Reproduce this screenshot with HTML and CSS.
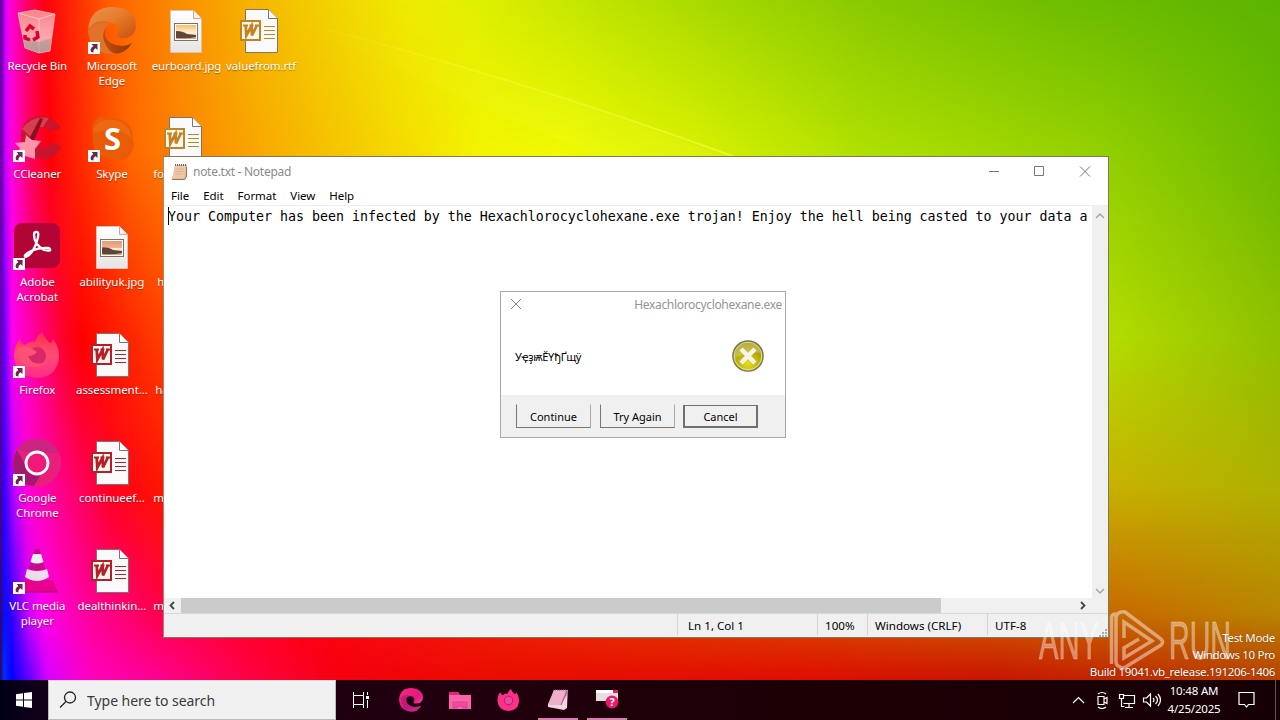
FILE: index.html
```html
<!DOCTYPE html>
<html lang="en">
<head>
<meta charset="utf-8">
<title>Desktop</title>
<link rel="stylesheet" href="styles.css">
</head>
<body>
<svg class="defs" width="0" height="0">
  <defs>
    <linearGradient id="paper" x1="0" y1="0" x2="0" y2="1"><stop offset="0" stop-color="#fff"/><stop offset="1" stop-color="#e6e4e4"/></linearGradient>
    <linearGradient id="edgeA" x1="0" y1="0" x2="1" y2="1"><stop offset="0" stop-color="#e89650"/><stop offset=".5" stop-color="#e47a28"/><stop offset="1" stop-color="#c85010"/></linearGradient>
    <linearGradient id="edgeB" x1="0" y1="0" x2="1" y2="0"><stop offset="0" stop-color="#d85a10"/><stop offset="1" stop-color="#8e3804"/></linearGradient>
    <linearGradient id="edgeP" x1="0" y1="0" x2="1" y2="1"><stop offset="0" stop-color="#ff2a7c"/><stop offset=".55" stop-color="#e01880"/><stop offset="1" stop-color="#ff60a8"/></linearGradient>
    <linearGradient id="bin" x1="0" y1="0" x2="0" y2="1"><stop offset="0" stop-color="#f8848a"/><stop offset=".65" stop-color="#ffa8ae"/><stop offset="1" stop-color="#b8a0a0"/></linearGradient>
    <linearGradient id="sky" x1="0" y1="0" x2="0" y2="1"><stop offset="0" stop-color="#f6bd6c"/><stop offset=".55" stop-color="#fff0d8"/><stop offset="1" stop-color="#d8a880"/></linearGradient>
    <linearGradient id="foxg" x1="0" y1="0" x2="0" y2="1"><stop offset="0" stop-color="#f83048"/><stop offset=".5" stop-color="#ff4c74"/><stop offset="1" stop-color="#ff2c88"/></linearGradient>
    <radialGradient id="gold" cx=".5" cy=".75" r=".7"><stop offset="0" stop-color="#e4dc20"/><stop offset=".6" stop-color="#b6aa08"/><stop offset="1" stop-color="#8c8418"/></radialGradient>
    <symbol id="arrow" viewBox="0 0 12 12"><rect width="12" height="12" fill="#fff"/><path d="M3.500 2h6v6L7.600 6.300Q5 7.500 5.500 10.500L3 10Q1.500 6.500 5.400 4z" fill="#70264c"/></symbol>
    <symbol id="word" viewBox="0 0 48 48">
      <path d="M8.500 2.500h23l9 9v34h-32z" fill="#fafafa" stroke="#82716c"/>
      <path d="M31.500 2.500v9h9" fill="#fff" stroke="#82716c"/>
      <path d="M27 19.500h11M27 23.500h11M27 27.500h11M27 31.500h11" stroke="currentColor"/>
      <path d="M4 14h19v19H4z" fill="#fff6ee" stroke="currentColor" stroke-width="2"/>
      <path d="M6 18.500h5M12.500 18.500h4M18 18.500h4" stroke="currentColor" stroke-width="2"/>
      <path d="M8.700 18l.6 10.500L14.500 19l.5 9.500L20 18" fill="none" stroke="currentColor" stroke-width="2.800"/>
    </symbol>
    <symbol id="image" viewBox="0 0 48 48">
      <path d="M8.500 3.500h23l8 8v34h-31z" fill="url(#paper)" stroke="#d4c4b4"/>
      <path d="M31.500 3.500v8h8" fill="#f4f2f0" stroke="#c8a890"/>
      <rect x="12.500" y="16.500" width="23" height="17" fill="#fff" stroke="#807060"/>
      <rect x="14" y="18" width="20" height="14" fill="url(#sky)"/>
      <path d="M14 24q7 0 11 3l9 1v2q-8 2-20 1z" fill="#604438"/>
    </symbol>
    <symbol id="shape-fox" viewBox="0 0 48 48">
      <path d="M1 26Q1 14 7 8Q8 13 12 14Q17 9 22 11Q24 5 29 1Q32 8 37 12Q40 11 40 8Q47 17 46 27Q44 46 24 47Q3 46 1 26z"/>
    </symbol>
  </defs>
</svg>

<main class="desktop">
  <div class="wallpaper">
    <div class="band b0"></div><div class="band b1"></div><div class="band b2"></div><div class="band b3"></div><div class="band b4"></div><div class="band b5"></div>
    <svg class="ray" viewBox="0 0 1280 680">
      <defs><linearGradient id="beam" gradientUnits="userSpaceOnUse" x1="290" y1="0" x2="735" y2="0"><stop offset="0" stop-color="#ffff50" stop-opacity="0"/><stop offset=".5" stop-color="#ffff50" stop-opacity=".35"/><stop offset="1" stop-color="#ffff50" stop-opacity=".5"/></linearGradient></defs>
      <path d="M290 20Q520 78 735 157" stroke="url(#beam)" fill="none" stroke-width="2"/><path d="M290 22Q520 80 730 158H600z" fill="url(#beam)" opacity=".25"/></svg>
  </div>

  <section class="icons">
    <div class="item"><svg class="pic" viewBox="0 0 48 48"><path d="M5 6L22 3L42 7L37 44L26 46L12 41z" fill="url(#bin)" stroke="#e8c0c0" stroke-opacity=".8"/><path d="M5 6l21 6 16-5M26 12v34" fill="none" stroke="#ffd8d8" stroke-opacity=".7"/><path d="M10 31l16 4 13-4-2 13-11 2-14-5z" fill="#ac9494" opacity=".55"/><path d="M13 24l4-5 4 3M24 24l1 6-5 3M17 33l-5-2 0-3" fill="none" stroke="#e00030" stroke-width="3.500"/></svg><span>Recycle Bin</span></div>
    <div class="item"><svg class="pic" viewBox="0 0 48 48"><path d="M0 23Q2 0 25 0Q47 1 48 19Q47 32 33 31Q27 30 30 26Q33 19 24 16Q8 11 0 23z" fill="url(#edgeA)"/><path d="M0 24Q7 12 20 16Q12 29 23 36Q35 42 44 36Q37 48 24 47Q3 45 0 24z" fill="url(#edgeB)"/><path d="M0 24Q7 12 22 16Q10 26 19 40Q23 46 28 47Q2 49 0 24z" fill="#e0722a"/></svg><svg class="sc"><use href="#arrow"/></svg><span>Microsoft<br>Edge</span></div>
    <div class="item"><svg class="pic"><use href="#image"/></svg><span>eurboard.jpg</span></div>
    <div class="item gold"><svg class="pic"><use href="#word"/></svg><span>valuefrom.rtf</span></div>

    <div class="item"><svg class="pic" viewBox="0 0 48 48"><path d="M48 13Q40 1 25 1Q8 4 8 22Q8 43 29 44Q43 44 48 32L39 27Q35 34 29 32Q20 29 22 20Q24 11 32 12L38 16z" fill="#c8142c"/><path d="M9 14Q18 0 36 3L30 12Q20 11 20 24z" fill="#e05060" opacity=".7"/><path d="M27 3l3 1-9 22-5-2z" fill="#8c1024"/><path d="M13 20L19 25L28 26L22 34L22 44L12 41L3 42L7 33L2 28L12 27z" fill="#ff94ac"/></svg><svg class="sc"><use href="#arrow"/></svg><span>CCleaner</span></div>
    <div class="item"><svg class="pic" viewBox="0 0 48 48"><path d="M13 2Q18 1 23 3Q45 3 45 25Q48 32 42 40Q37 47 29 44Q3 45 5 22Q2 5 13 2z" fill="#e85c08"/><path d="M6 13Q12 3 26 5Q42 8 44 24Q33 11 6 18z" fill="#f07018" opacity=".6"/><text class="skype-s" x="24.500" y="35" text-anchor="middle">S</text></svg><svg class="sc"><use href="#arrow"/></svg><span>Skype</span></div>
    <div class="item gold cut"><svg class="pic"><use href="#word"/></svg><span>fo</span></div>
    <div class="item none"></div>

    <div class="item"><svg class="pic" viewBox="0 0 48 48"><rect x="1" y="0" width="46" height="45" rx="8" fill="#b30436"/><path d="M23 9Q27 8 24 18Q20 31 13 34Q9 33 18 28Q28 24 36 25Q40 29 31 27Q21 21 21 12Q21 9 23 9z" fill="none" stroke="#fff" stroke-width="2.300"/></svg><svg class="sc"><use href="#arrow"/></svg><span>Adobe<br>Acrobat</span></div>
    <div class="item"><svg class="pic"><use href="#image"/><path d="M14 18h20v7H14z" fill="#e07868" opacity=".5"/></svg><span>abilityuk.jpg</span></div>
    <div class="item cut"><svg class="pic"></svg><span class="h">ha</span></div>
    <div class="item none"></div>

    <div class="item"><svg class="pic" viewBox="0 0 48 48"><g fill="url(#foxg)"><use href="#shape-fox"/></g><circle cx="24" cy="25" r="9" fill="#d82868"/><path d="M4 17q8-3 14 0l6 4q-3 4-9 4 4 11 19 6-9 8-20 4Q4 30 4 17z" fill="#ff5078"/></svg><svg class="sc"><use href="#arrow"/></svg><span>Firefox</span></div>
    <div class="item red"><svg class="pic"><use href="#word"/></svg><span>assessment...</span></div>
    <div class="item cut"><svg class="pic"></svg><span class="b">ha</span></div>
    <div class="item none"></div>

    <div class="item"><svg class="pic" viewBox="0 0 48 48"><circle cx="24" cy="23.500" r="24" fill="#e8207c"/><path d="M4 11Q12-1 24 0Q40 1 46 14H24z" fill="#c82480"/><path d="M4 11L14 29L28 35L21 47Q0 45 0 23Q1 16 4 11z" fill="#a41870"/><circle cx="24" cy="24" r="11" fill="#f01878" stroke="#fff" stroke-width="2.800"/></svg><svg class="sc"><use href="#arrow"/></svg><span>Google<br>Chrome</span></div>
    <div class="item red"><svg class="pic"><use href="#word"/></svg><span>continueef...</span></div>
    <div class="item cut"><svg class="pic"></svg><span>m</span></div>
    <div class="item none"></div>

    <div class="item"><svg class="pic" viewBox="0 0 48 48"><path d="M9 33h31l5 12H3z" fill="#e80090"/><path d="M3 45h42" stroke="#a00070"/><path d="M22 2h4l9 28q-11 7-22 0z" fill="#c80890"/><path d="M20 7h8l2.500 8q-6.500 3-13 0z" fill="#eee"/><path d="M14 22q10 4 20 0l2 8q-12 8-24 0z" fill="#eedce8"/></svg><svg class="sc"><use href="#arrow"/></svg><span>VLC media<br>player</span></div>
    <div class="item red"><svg class="pic"><use href="#word"/></svg><span>dealthinkin...</span></div>
    <div class="item cut"><svg class="pic"></svg><span>m</span></div>
    <div class="item none"></div>
  </section>

  <section class="notepad">
    <header class="title">
      <svg width="18" height="18" viewBox="0 0 18 18"><path d="M4 2h12v11l-2 4H1z" fill="#e2bd9c"/><path d="M4 3h11l-2 12H1z" fill="#ecc8a8"/><path d="M5 6h8M4.500 8.500h8M4 11h8" stroke="#d8a888" stroke-width=".7"/><path d="M4 2h12" stroke="#806050" stroke-dasharray="1 1" stroke-width="2"/><path d="M15.500 4v9.500l-2 3H1" fill="none" stroke="#a07050"/></svg>
      <span>note.txt - Notepad</span>
      <svg class="wc" width="135" height="29" viewBox="0 0 135 29" fill="none" stroke="#777"><path d="M16 14.500h10M61.500 9.500h9v9h-9zM107 9.500l10 10M117 9.500l-10 10"/></svg>
    </header>
    <nav class="menu"><span>File</span><span>Edit</span><span>Format</span><span>View</span><span>Help</span></nav>
    <div class="work">
      <div class="editor"><i class="caret"></i><pre>Your Computer has been infected by the Hexachlorocyclohexane.exe trojan! Enjoy the hell being casted to your data a</pre></div>
      <div class="vbar"><svg width="16" height="16"><path d="M4 10l4-4 4 4" /></svg><svg width="16" height="16"><path d="M4 7l4 4 4-4"/></svg></div>
    </div>
    <div class="hbar"><svg width="17" height="15"><path d="M10 4L6.500 7.500L10 11"/></svg><div class="thumb"></div><svg class="r" width="16" height="15"><path d="M6 4l3.500 3.500L6 11"/></svg></div>
    <footer class="status"><span class="s1">Ln 1, Col 1</span><span class="s2">100%</span><span class="s3">Windows (CRLF)</span><span class="s4">UTF-8</span>
      <svg width="10" height="10"><path d="M1 9h8M4 6h5M7 3h2" stroke="#aaa" stroke-width="2" stroke-dasharray="2 1"/></svg></footer>
  </section>

  <section class="dialog">
    <header><svg width="12" height="12"><path d="M1 1l10 10M11 1L1 11" stroke="#888" fill="none"/></svg><span>Hexachlorocyclohexane.exe</span></header>
    <div class="msg"><span>УҿҙѭӖҮђҐщӱ</span>
      <svg width="32" height="32" viewBox="0 0 32 32"><circle cx="16" cy="16" r="15.200" fill="url(#gold)" stroke="#77775a" stroke-width="1.300"/><circle cx="16" cy="16" r="13.800" fill="none" stroke="#e8e490" stroke-width="1"/><path d="M3 15Q4 3 16 3Q28 3 29 13Q18 10 3 18z" fill="#d8d070" opacity=".55"/><path d="M9 9l14 14M23 9L9 23" stroke="#f6f4ec" stroke-width="4.500"/></svg></div>
    <footer><button>Continue</button><button>Try Again</button><button class="def">Cancel</button></footer>
  </section>

  <div class="build"><p>Test Mode</p><p>Windows 10 Pro</p><p>Build 19041.vb_release.191206-1406</p></div>

  <svg class="mark" viewBox="0 0 200 64">
    <g class="mark-text"><text x="3" y="51" textLength="60" lengthAdjust="spacingAndGlyphs">ANY</text><text x="133" y="51" textLength="62" lengthAdjust="spacingAndGlyphs">RUN</text></g>
    <path d="M75.500 56V10Q75.500 6 80 6M80 54V9Q82 3 89 4L125 31Q128 34 125 37L88 60Q80 59 80 54M88 30V14l28 19-28 17V40l15-9" fill="none" stroke="#fff" stroke-width="3.500" stroke-opacity=".45"/>
  </svg>
</main>

<footer class="taskbar">
  <div class="start"><svg width="16" height="16"><path d="M0 2.200L7 1.200V7.500H0zM8 1L16 0v7.500H8zM0 8.500h7v6.300L0 13.800zM8 8.500h8V16L8 15z" fill="#fff"/></svg></div>
  <div class="search"><svg width="18" height="18" viewBox="0 0 18 18"><circle cx="11" cy="6.500" r="5.500"/><path d="M7 10.500L1 16.500"/></svg><span>Type here to search</span></div>
  <div class="apps">
    <div><svg width="18" height="16" viewBox="0 0 18 16" fill="none" stroke="#fff"><path d="M1.500 0v3.500h10V0M1.500 16v-3.500h10V16M1.500 3.500v9M11.500 3.500v9M15.500 0v3M15.500 8v8"/><path d="M14 5.500h3" stroke-width="3"/></svg></div>
    <div><svg width="24" height="24" viewBox="0 0 48 48"><path d="M0 23Q2 0 25 0Q47 1 48 19Q47 32 33 31Q27 30 30 26Q33 19 24 16Q10 16 16 30Q24 42 44 36Q37 48 24 47Q2 46 0 23z" fill="url(#edgeP)"/><path d="M3 20Q12 10 23 16Q10 18 16 30Q24 42 44 36Q37 48 24 47Q6 45 3 20z" fill="#b01878" opacity=".65"/></svg></div>
    <div><svg width="22" height="18"><path d="M0 1h9l2 3h11v14H0z" fill="#ff62ac"/><path d="M0 1h9l2 3H0z" fill="#e02878"/><path d="M4 11h14v6h-4v-2H8v2H4z" fill="#f44c9c" stroke="#d84090"/></svg></div>
    <div><svg width="23" height="24" viewBox="0 0 48 48"><g fill="#ff3088"><use href="#shape-fox"/></g><circle cx="24" cy="25" r="9" fill="#e84898" stroke="#b01870" stroke-width="2"/></svg></div>
    <div class="open"><svg width="22" height="22" viewBox="0 0 22 22"><path d="M7 1h14l-1 18-18-4z" fill="#d88cb4"/><path d="M7 1h12l-5 15L1 15z" fill="#ecb0cc"/><path d="M1 15l13 1 6-10v13l-3 2-16-3z" fill="#f3d4e2"/><path d="M14 16L20 2" stroke="#a06080"/><path d="M8 1h12" stroke="#875070" stroke-dasharray="1 1"/></svg></div>
    <div class="open"><svg width="24" height="22"><path d="M1 1h22v11H1z" fill="#e8dce0"/><path d="M1 1h22v3H1z" fill="#fff"/><path d="M18 1h5v3h-5z" fill="#e02060"/><circle cx="17" cy="13" r="6.500" fill="#e8186c"/><text class="question" x="17" y="17" text-anchor="middle">?</text></svg></div>
  </div>
  <div class="tray">
    <svg width="90" height="20" viewBox="0 0 90 20" fill="none" stroke="#fff" stroke-width="1.200"><path d="M1 13l5.500-5.500L12 13M26 6.500h6v8h-6zM32 9l3-1.500v6L32 12M26 4q4-3 8 0M26 17q4 3 8 0M51.500 5.500h11v8h-11M57 14v3M53 17.500h8M47.500 4.500h4v4h-4zM49.500 8.500v8h3M71.500 8h3l4-4v12l-4-4h-3zM81 8q2 2 0 4M83.500 6q4 4 0 8M86 4q5 6 0 12"/></svg>
    <div class="clock"><span>10:48 AM</span><span>4/25/2025</span></div>
    <svg class="note" width="17" height="18" fill="none" stroke="#fff" stroke-width="1.200"><path d="M1 1.500h15v12h-5.500L8.500 16l-2-2.500H1z"/></svg>
    <i class="peek"></i>
  </div>
</footer>
</body>
</html>
```
FILE: styles.css
```css
* { box-sizing: border-box; }
body { margin: 0; width: 1280px; height: 720px; overflow: hidden; display: flex; flex-direction: column; font: 12px "Noto Sans", "Open Sans", sans-serif; background: #000; }
.defs { position: absolute; }
svg { display: block; flex: none; }
.desktop { position: relative; height: 680px; flex: none; overflow: hidden; }

/* The wallpaper blends one horizontal colour ramp into the next going down. */
.wallpaper, .band, .ray { position: absolute; inset: 0; }
.band { -webkit-mask-repeat: no-repeat; mask-repeat: no-repeat; }
.b0 { background: linear-gradient(90deg, #680090 0, #8000d0 3px, #d000ff 5px, #ff00e0 9px, #ff0060 28px, #ff0010 45px, #ff3a00 85px, #ff6000 110px, #fb8e00 180px, #f6b400 250px, #f2d000 320px, #efec00 410px, #e2f000 470px, #c4e600 580px, #a4d800 720px, #86c800 880px, #70be00 1050px, #5cb400 1280px); }
.b1 { background: linear-gradient(90deg, #680090 0, #8000d0 3px, #c800ff 5px, #ff00e0 12px, #ff0050 32px, #ff0008 50px, #ff3000 85px, #ff6600 130px, #fb8400 180px, #f8a800 260px, #f5cc00 360px, #f4f400 480px, #f0fa00 560px, #d8f000 700px, #b0e000 860px, #94d000 1100px, #6cba00 1280px); -webkit-mask-image: linear-gradient(transparent 0, #000 155px); mask-image: linear-gradient(transparent 0, #000 155px); }
.b2 { background: linear-gradient(90deg, #680090 0, #6000ff 4px, #ff00f0 12px, #ff00a0 34px, #ff0030 62px, #ff0000 82px, #ff3800 155px, #f08000 400px, #b4dc00 1110px, #90c000 1280px); -webkit-mask-image: linear-gradient(transparent 155px, #000 340px); mask-image: linear-gradient(transparent 155px, #000 340px); }
.b3 { background: linear-gradient(90deg, #500080 0, #3000ff 4px, #c800ff 15px, #ff00d8 27px, #ff0080 65px, #ff0020 110px, #ff1400 160px, #e04000 500px, #c8b000 1110px, #b0b000 1280px); -webkit-mask-image: linear-gradient(transparent 340px, #000 490px); mask-image: linear-gradient(transparent 340px, #000 490px); }
.b4 { background: linear-gradient(90deg, #400060 0, #0010ff 4px, #3000ff 12px, #d000ff 29px, #ff00f0 42px, #ff00a0 85px, #ff0050 155px, #ff0010 300px, #e04000 700px, #c86800 1110px, #b88400 1280px); -webkit-mask-image: linear-gradient(transparent 490px, #000 615px); mask-image: linear-gradient(transparent 490px, #000 615px); }
.b5 { background: linear-gradient(90deg, #300050 0, #0030ff 4px, #0000ff 12px, #7000ff 32px, #d800ff 48px, #ff00c0 90px, #ff0090 160px, #ff0048 245px, #f50010 340px, #ea0c00 500px, #e00c00 800px, #c81400 1000px, #c02c00 1150px, #b84000 1280px); -webkit-mask-image: linear-gradient(transparent 615px, #000 680px); mask-image: linear-gradient(transparent 615px, #000 680px); }

.icons { position: absolute; left: 0; top: 7px; display: grid; grid-template-columns: repeat(4, 74.600px); grid-auto-rows: 108px; }
.item { position: relative; display: flex; flex-direction: column; align-items: center; gap: 3px; color: #fff; font-size: 11.500px; line-height: 15px; text-align: center; letter-spacing: -.08px; }
.item span { white-space: nowrap; text-shadow: 0 1px 1px rgba(60, 20, 0, .45); }
.none { visibility: hidden; }
.pic { width: 48px; height: 48px; }
.sc { position: absolute; left: 13px; top: 35px; width: 12px; height: 12px; }
.gold .pic { color: #c28322; }
.red .pic { color: #b3202a; }
.cut .pic { margin-right: 3px; }
.cut span { align-self: flex-start; padding-left: 4px; }
.cut .h { padding-left: 8px; }
.cut .b { padding-left: 6px; }
.skype-s { font: bold 31px "Open Sans", sans-serif; fill: #fff; }

.notepad { position: absolute; left: 163px; top: 156px; width: 946px; height: 482px; background: #fff; border: 1px solid #7c7c5c; border-left-color: #b08070; display: flex; flex-direction: column; }
.title { height: 29px; display: flex; align-items: center; padding-left: 7px; gap: 4px; color: #8b8b8b; font-size: 12px; letter-spacing: -.28px; }
.wc { margin-left: auto; margin-right: 0; }
.menu { height: 20px; padding-left: 7px; display: flex; align-items: center; gap: 14px; border-bottom: 1px solid #eee; font-size: 11.500px; letter-spacing: -.05px; }
.work { flex: 1; display: flex; min-height: 0; }
.editor { flex: 1; overflow: hidden; display: flex; align-items: flex-start; padding: 1px 0 0 4px; }
.caret { width: 1px; height: 18px; background: #000; margin-right: -1px; }
.editor pre { margin: 0; font: 13.290px/19px "DejaVu Sans Mono", monospace; }
.vbar { width: 16px; background: #f0f0f0; display: flex; flex-direction: column; justify-content: space-between; padding: 2px 0 0; }
.vbar path { stroke: #a6a6a6; fill: none; stroke-width: 1.500; }
.hbar { height: 15px; background: #f0f0f0; display: flex; }
.hbar path { stroke: #444; fill: none; stroke-width: 1.800; }
.thumb { width: 760px; background: #cbcbcb; }
.hbar .r { margin-left: auto; margin-right: 17px; }
.status { height: 24px; border-top: 1px solid #d8d8d8; background: #f0f0f0; display: flex; font-size: 11.600px; line-height: 24px; padding-left: 513px; }
.status span { border-left: 1px solid #d4d4d4; margin-bottom: 2px; }
.s1 { width: 140px; padding-left: 10px; }
.s2 { width: 50px; padding-left: 7px; }
.s3 { width: 120px; padding-left: 7px; }
.s4 { padding-left: 7px; }
.status svg { margin: auto 0 0 auto; }

.dialog { position: absolute; left: 500px; top: 291px; width: 286px; height: 147px; background: #fff; border: 1px solid #a8a8a8; display: flex; flex-direction: column; }
.dialog header { height: 24px; display: flex; justify-content: space-between; align-items: center; padding: 0 3px 0 9px; color: #949494; letter-spacing: -.32px; }
.msg { flex: 1; display: flex; justify-content: space-between; align-items: center; padding: 1px 21px 0 14px; font-size: 11px; }
.msg span { letter-spacing: -.3px; }
.dialog footer { height: 42px; background: #f0f0f0; display: flex; gap: 9px; padding: 9px 0 0 15px; }
.dialog button { width: 75px; height: 24px; padding: 0; font: 11px "Noto Sans", sans-serif; color: #000; background: #f0f0f0; border: 1px solid; border-color: #f0f0f0 #aaa #777 #777; }
.dialog .def { border: 2px solid #707070; border-top-width: 1px; margin-left: -1px; height: 23px; margin-top: 1px; }

.build { position: absolute; right: 5px; top: 629px; color: #fff; text-align: right; font-size: 11.500px; line-height: 17px; letter-spacing: -.32px; text-shadow: 0 0 1px #0008; }
.build p { margin: 0; }
.mark { position: absolute; left: 1036px; top: 608px; width: 200px; height: 64px; }
.mark-text { font: 53px "Liberation Sans", sans-serif; fill: rgba(255, 255, 255, .42); stroke: rgba(255, 255, 255, .3); }

.taskbar { height: 40px; flex: none; display: flex; color: #fff; background: linear-gradient(90deg, #000018 0, #100018 35px, #20000f 350px, #1d0006 800px, #150006 1280px); }
.start { width: 48px; display: flex; align-items: center; justify-content: center; }
.search { width: 288px; background: #f1f1f1; border: 1px solid #bbb; border-top-color: #ddd; display: flex; align-items: center; gap: 10px; padding-left: 10px; color: #3a3a3a; font-size: 14px; letter-spacing: -.04px; }
.search svg { fill: none; stroke: #222; stroke-width: 1.300; }
.apps { display: flex; }
.apps div { width: 49px; display: flex; justify-content: center; align-items: center; }
.apps div:nth-child(2) { margin-left: 1px; }
.open { box-shadow: inset 0 -2px #d87cb4; }
.apps .open { width: 40px; margin: 0 4px 0 5px; }
.question { font: bold 11px "Noto Sans", sans-serif; fill: #fff; }
.tray { margin-left: auto; display: flex; align-items: center; padding-right: 4px; }
.clock { width: 60px; margin-left: 2px; display: flex; flex-direction: column; align-items: center; font-size: 11.500px; line-height: 18px; white-space: nowrap; letter-spacing: -.2px; }
.note { margin: 0 20px 0 14px; }
.peek { width: 1px; height: 40px; background: #655; }
```
